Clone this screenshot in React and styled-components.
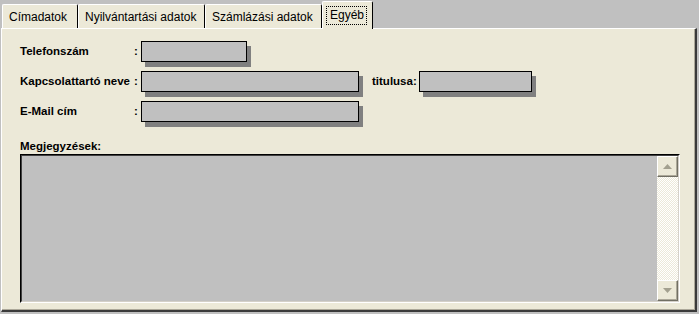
import React from "react";
import styled, { createGlobalStyle } from "styled-components";

const GlobalStyle = createGlobalStyle`
  html, body {
    margin: 0;
    padding: 0;
    background: #c0c0c0;
  }
  body {
    font-family: "Liberation Sans", Arial, sans-serif;
  }
`;

const Window = styled.div`
  width: 699px;
  height: 314px;
  background: #c0c0c0;
  overflow: hidden;
  position: relative;
`;

const TabStrip = styled.div`
  display: flex;
  align-items: flex-end;
  height: 28px;
  padding-left: 2px;
  position: relative;
  z-index: 2;
`;

const Tab = styled.div`
  box-sizing: border-box;
  width: ${(p) => p.$w}px;
  height: ${(p) => (p.$active ? 28 : 24)}px;
  margin-bottom: ${(p) => (p.$active ? -1 : 0)}px;
  background: #ece9d8;
  border-top: 1px solid #ffffff;
  border-left: 1px solid #ffffff;
  border-right: 1px solid #000000;
  border-radius: 2px 2px 0 0;
  display: flex;
  align-items: center;
  padding-left: ${(p) => (p.$active ? 3 : 6)}px;
  padding-top: ${(p) => (p.$active ? 0 : 1)}px;
  font-size: 12px;
  color: #000;
  white-space: nowrap;
`;

const Focus = styled.span`
  border: 1px dotted #000;
  padding: 2px 2px 2px 3px;
  line-height: 13px;
`;

const Panel = styled.div`
  box-sizing: border-box;
  width: 696px;
  height: 284px;
  margin-left: 1px;
  background: #ece9d8;
  border-top: 1px solid #ffffff;
  border-left: 1px solid #ffffff;
  border-right: 2px solid #3a3a3a;
  border-bottom: 2px solid #3a3a3a;
  box-shadow: inset -1px -1px 0 #aca899;
  padding: 12px 0 0 18px;
`;

const Form = styled.div`
  display: flex;
  flex-direction: column;
  gap: 10px;
`;

const Row = styled.div`
  display: flex;
  align-items: center;
  height: 20px;
`;

const Label = styled.div`
  width: ${(p) => p.$w || 114}px;
  margin-left: ${(p) => p.$ml || 0}px;
  font-size: 11.5px;
  font-weight: bold;
  color: #000;
  white-space: nowrap;
`;

const Colon = styled.div`
  width: 7px;
  font-size: 11.5px;
  font-weight: bold;
`;

const Field = styled.div`
  box-sizing: border-box;
  width: ${(p) => p.$w}px;
  height: 21px;
  background: #c0c0c0;
  border: 1px solid #000;
  box-shadow: 4px 5px 0 #808080;
`;

const NotesLabel = styled.div`
  margin-top: 19px;
  height: 13px;
  line-height: 13px;
  font-size: 11.5px;
  font-weight: bold;
`;

const NotesOuter = styled.div`
  box-sizing: border-box;
  margin-top: 1px;
  width: 660px;
  height: 149px;
  border-top: 1px solid #000;
  border-left: 1px solid #000;
  border-right: 1px solid #ffffff;
  border-bottom: 1px solid #ffffff;
  display: flex;
`;

const NotesInner = styled.div`
  flex: 1;
  display: flex;
  border-top: 1px solid #404040;
  border-left: 1px solid #404040;
  border-right: 1px solid #d4d0c8;
  border-bottom: 1px solid #d4d0c8;
  background: #c0c0c0;
`;

const NotesText = styled.div`
  flex: 1;
`;

const ScrollBar = styled.div`
  width: 21px;
  display: flex;
  flex-direction: column;
  background: repeating-conic-gradient(#ffffff 0 25%, #ece9d8 0 50%) 0 0 / 2px 2px;
`;

const Track = styled.div`
  flex: 1;
`;

const ArrowButton = styled.div`
  box-sizing: border-box;
  height: 21px;
  background: #ece9d8;
  border-top: 1px solid #ffffff;
  border-left: 1px solid #ffffff;
  border-right: 1px solid #716f64;
  border-bottom: 1px solid #716f64;
  box-shadow: inset -1px -1px 0 #aca899;
  display: flex;
  align-items: center;
  justify-content: center;
`;

const Arrow = ({ down }) => (
  <svg width="9" height="5" viewBox="0 0 9 5">
    <path
      d={down ? "M0 0 H9 L4.5 5 Z" : "M4.5 0 L9 5 H0 Z"}
      fill="#a3a08f"
    />
  </svg>
);

export default function App() {
  return (
    <Window>
      <GlobalStyle />
      <TabStrip>
        <Tab $w={76}>Címadatok</Tab>
        <Tab $w={127}>Nyilvántartási adatok</Tab>
        <Tab $w={117}>Számlázási adatok</Tab>
        <Tab $w={51} $active>
          <Focus>Egyéb</Focus>
        </Tab>
      </TabStrip>
      <Panel>
        <Form>
          <Row>
            <Label>Telefonszám</Label>
            <Colon>:</Colon>
            <Field $w={106} />
          </Row>
          <Row>
            <Label>Kapcsolattartó neve</Label>
            <Colon>:</Colon>
            <Field $w={218} />
            <Label $w={47} $ml={13}>titulusa:</Label>
            <Field $w={113} />
          </Row>
          <Row>
            <Label>E-Mail cím</Label>
            <Colon>:</Colon>
            <Field $w={218} />
          </Row>
        </Form>
        <NotesLabel>Megjegyzések:</NotesLabel>
        <NotesOuter>
          <NotesInner>
            <NotesText />
            <ScrollBar>
              <ArrowButton>
                <Arrow />
              </ArrowButton>
              <Track />
              <ArrowButton>
                <Arrow down />
              </ArrowButton>
            </ScrollBar>
          </NotesInner>
        </NotesOuter>
      </Panel>
    </Window>
  );
}
